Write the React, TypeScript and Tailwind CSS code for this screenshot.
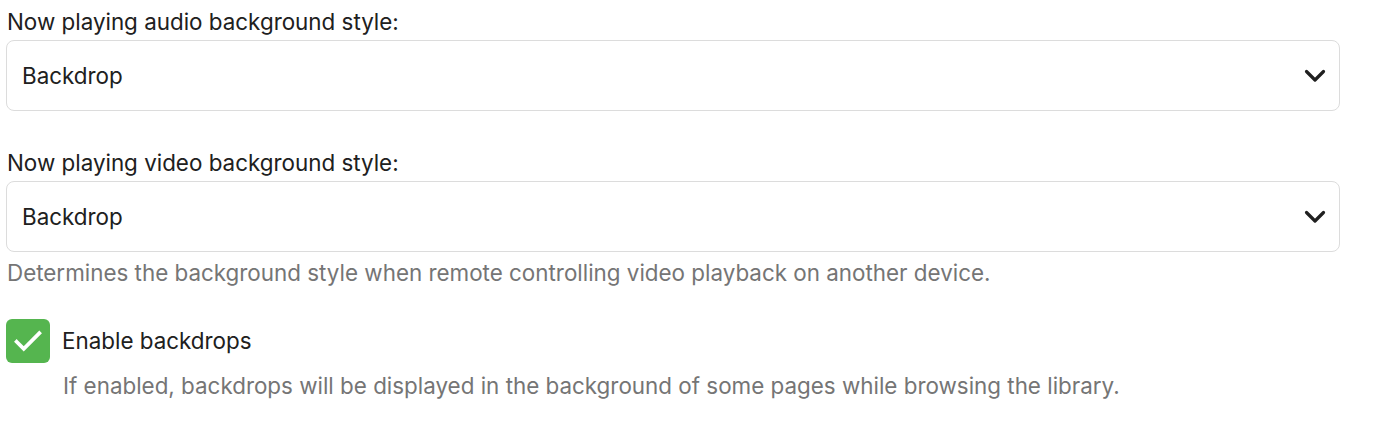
import React from "react";

function Chevron() {
  return (
    <svg width="22" height="14" viewBox="0 0 22 14" fill="none" stroke="#202020" strokeWidth="3.2" strokeLinecap="round" strokeLinejoin="round">
      <path d="M2.5 2.5l8.5 8.5 8.5-8.5" />
    </svg>
  );
}

function SelectField({ label }: { label: string }) {
  return (
    <div className="flex flex-col">
      <div className="h-[30px] leading-[30px] text-[22.4px] text-[#202020] pl-[7px]">{label}</div>
      <div className="mt-[3px] ml-[6px] w-[1334px] h-[71px] rounded-[8px] border border-[#dcdcdc] bg-white flex items-center justify-between pl-[15px] pr-[13px]">
        <span className="text-[22.4px] text-[#202020]">Backdrop</span>
        <Chevron />
      </div>
    </div>
  );
}

export default function App() {
  return (
    <div className="w-[1395px] h-[424px] bg-white pt-[7px]" style={{ fontFamily: "Inter, 'Noto Sans', sans-serif" }}>
      <SelectField label="Now playing audio background style:" />
      <div className="h-[37px]" />
      <SelectField label="Now playing video background style:" />
      <div className="pl-[7px] h-[42px] leading-[42px] text-[22.4px] text-[#757575]">
        Determines the background style when remote controlling video playback on another device.
      </div>
      <div className="mt-[25px] flex items-center">
        <div className="ml-[6px] w-[44px] h-[44px] rounded-[6px] bg-[#55b54f] flex items-center justify-center">
          <svg width="34" height="34" viewBox="0 0 24 24" fill="none" stroke="white" strokeWidth="2.6" strokeLinecap="square" strokeLinejoin="miter">
            <path d="M4 12.5l5 5L20 6.5" />
          </svg>
        </div>
        <span className="ml-[12px] text-[22.4px] text-[#202020]">Enable backdrops</span>
      </div>
      <div className="pl-[63px] mt-[8px] h-[30px] leading-[30px] text-[22.4px] text-[#757575]">
        If enabled, backdrops will be displayed in the background of some pages while browsing the library.
      </div>
    </div>
  );
}
